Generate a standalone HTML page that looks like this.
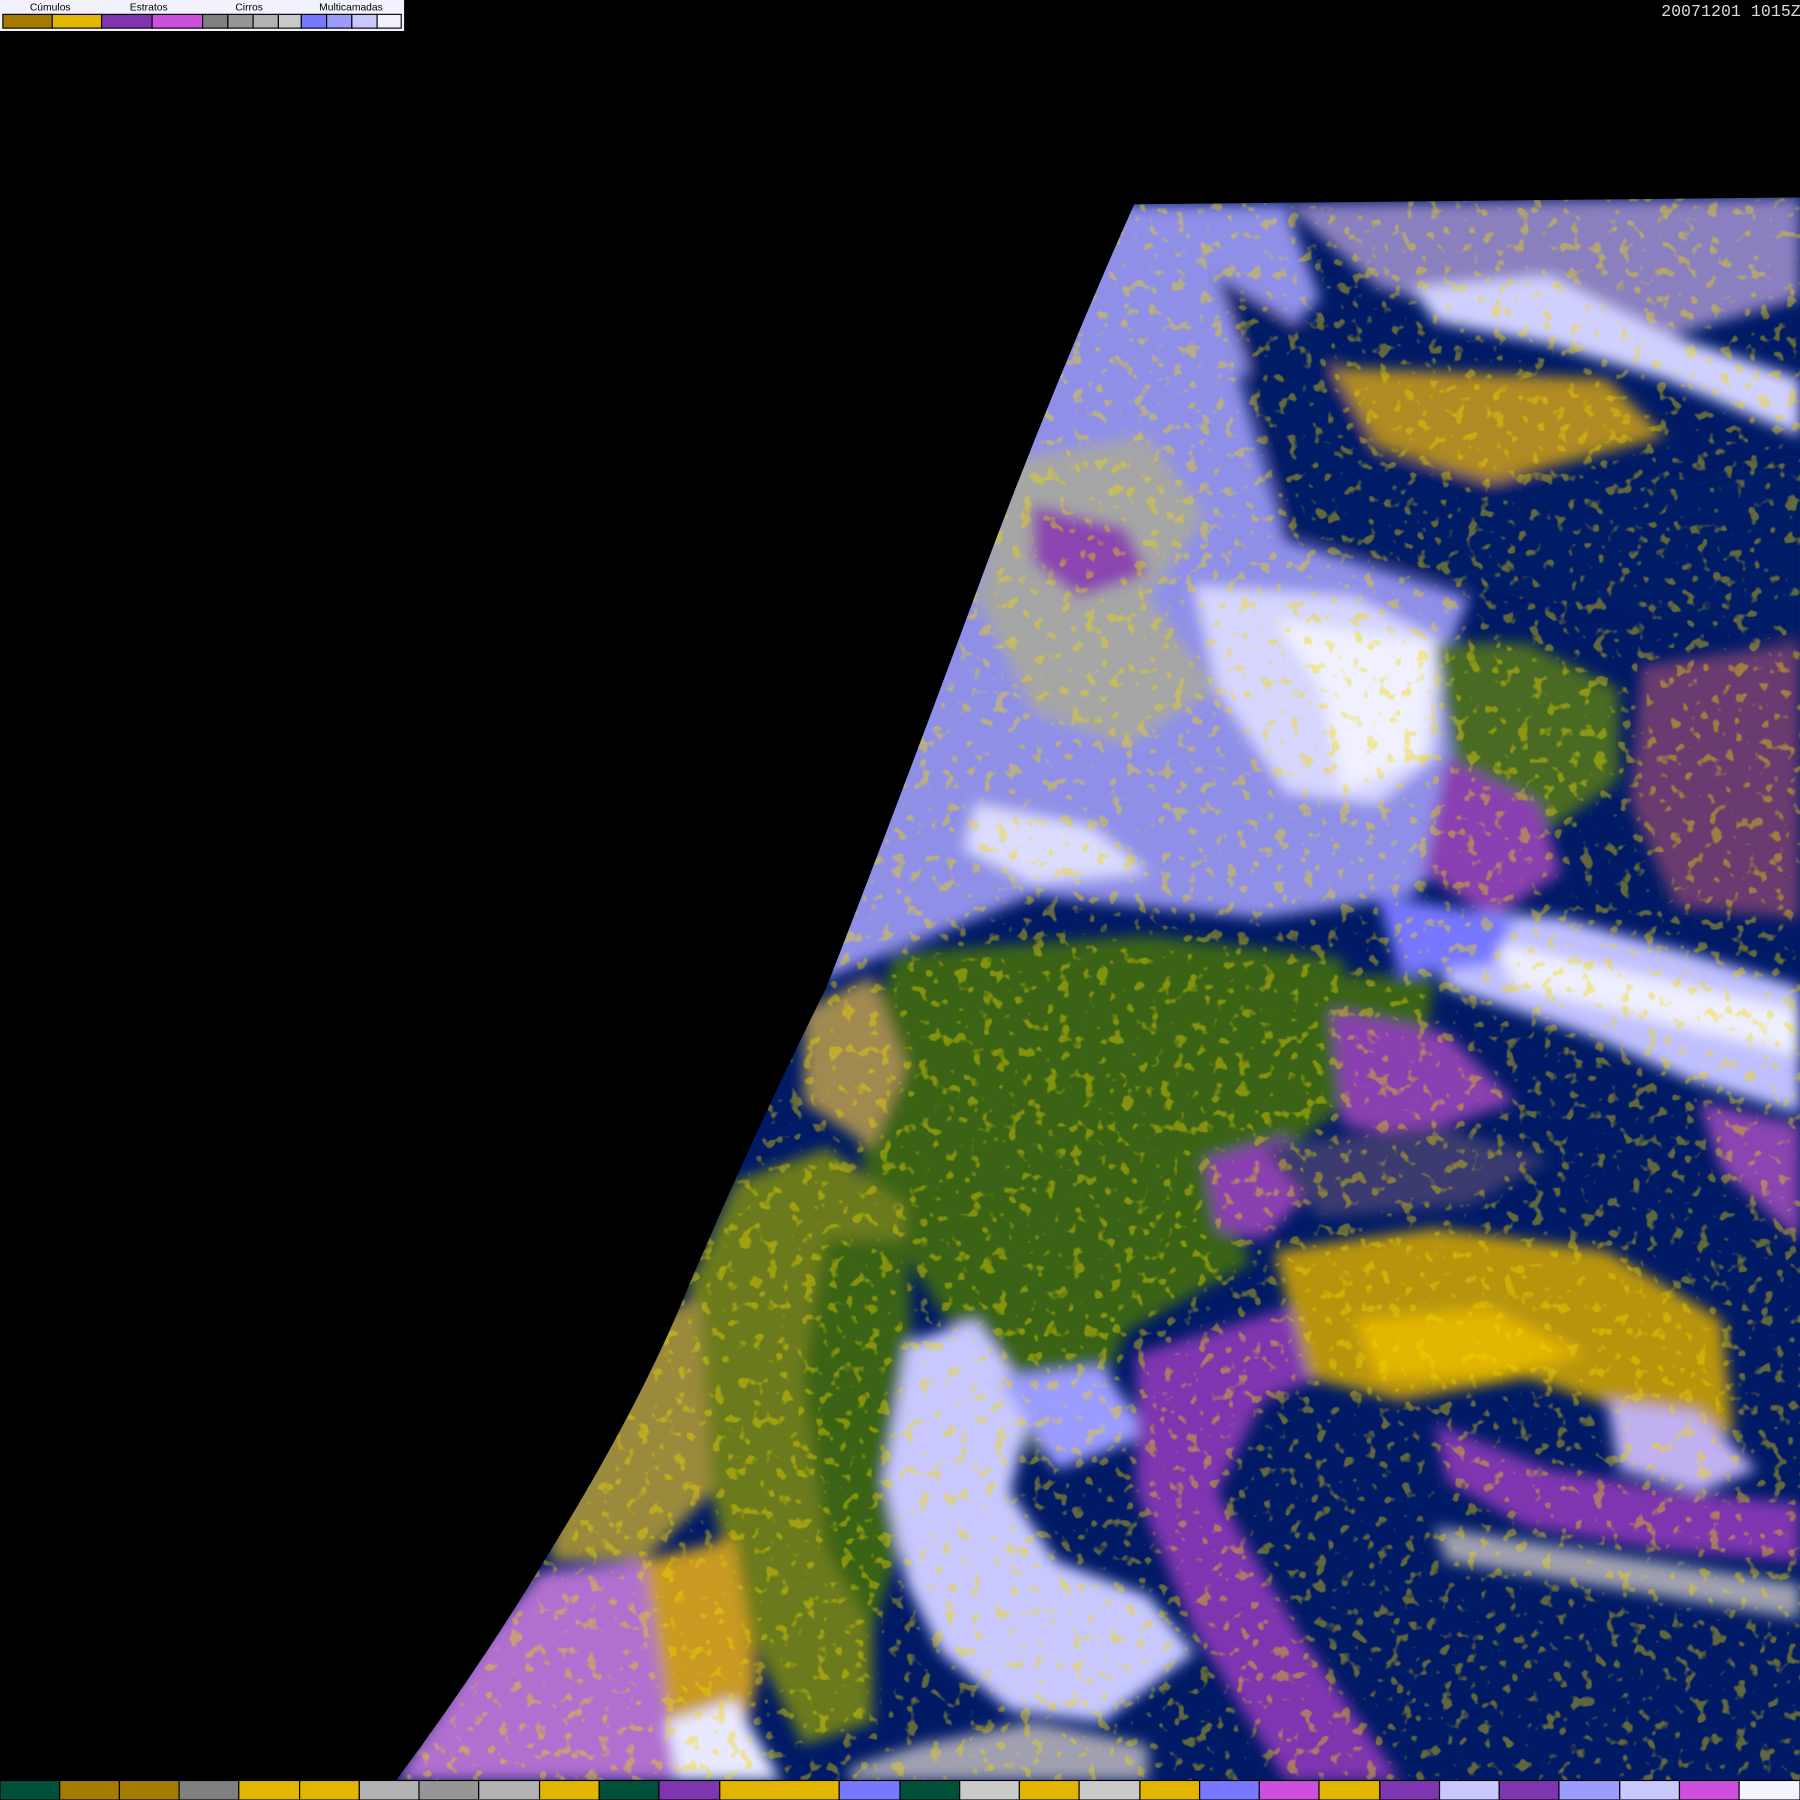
<!DOCTYPE html>
<html><head><meta charset="utf-8"><style>
html,body{margin:0;padding:0;background:#000;width:1800px;height:1800px;overflow:hidden}
svg{display:block}
</style></head><body>
<svg width="1800" height="1800" viewBox="0 0 1568 1568" xmlns="http://www.w3.org/2000/svg">
<defs>
<clipPath id="disc"><path d="M988,178 L1568,172 L1568,1551 L345,1551 Q420,1450 480,1350 Q560,1220 600,1120 Q660,980 720,860 Q790,680 860,490 Q920,330 988,178 Z"/></clipPath>
<filter id="n" x="0" y="0" width="100%" height="100%">
<feTurbulence type="fractalNoise" baseFrequency="0.09" numOctaves="2" seed="3"/>
<feColorMatrix values="0 0 0 0 0.89  0 0 0 0 0.71  0 0 0 0 0  0 0 0 9 -5.4"/>
</filter>
<filter id="b"><feGaussianBlur stdDeviation="6"/></filter>
</defs>
<rect width="1568" height="1568" fill="#000"/>
<g clip-path="url(#disc)">
<rect x="300" y="160" width="1300" height="1400" fill="#001a66"/>
<g filter="url(#b)">
<path d="M700,178 L1120,178 L1150,260 L1080,330 L1120,470 L1280,520 L1250,600 L1300,700 L1230,780 L1100,800 L900,780 L700,860 Z" fill="#8f8fe8"/>
<path d="M1120,178 L1568,172 L1568,260 L1430,300 L1300,280 L1200,250 Z" fill="#8a80c0"/>
<path d="M1230,250 L1350,240 L1450,290 L1568,330 L1568,380 L1450,330 L1350,300 L1250,280Z" fill="#d0d0ff"/>
<path d="M880,400 L1000,380 L1050,450 L1000,520 L1060,600 L980,650 L900,620 L850,520 Z" fill="#a6a6a6"/>
<path d="M900,440 L980,460 L1000,500 L940,520 L900,490Z" fill="#8a45b0"/>
<path d="M1040,510 L1180,520 L1260,560 L1250,660 L1200,700 L1120,690 L1060,600 Z" fill="#d6d6ff"/>
<path d="M1110,540 L1250,560 L1240,660 L1170,690 L1150,600Z" fill="#f0f0ff"/>
<path d="M850,700 L950,720 L1000,760 L900,770 L840,740Z" fill="#dcdcff"/>
<path d="M1060,240 L1160,300 L1200,400 L1350,420 L1480,420 L1568,400 L1568,560 L1480,540 L1350,520 L1240,500 L1120,460 L1090,330Z" fill="#001a66"/>
<path d="M1160,320 L1400,330 L1450,380 L1300,420 L1200,390Z" fill="#b08a20"/>
<path d="M1250,560 L1330,560 L1410,600 L1410,680 L1340,730 L1270,690 Z" fill="#4a6b22"/>
<path d="M1260,660 L1340,700 L1360,760 L1300,800 L1240,760Z" fill="#8a3fb0"/>
<path d="M1430,580 L1568,560 L1568,800 L1460,790 L1420,700Z" fill="#6a3a70"/>
<path d="M1240,790 L1360,800 L1470,830 L1568,860 L1568,970 L1470,940 L1380,900 L1260,860Z" fill="#c0c0ff"/>
<path d="M1300,820 L1568,880 L1568,920 L1320,860Z" fill="#eeeeff"/>
<path d="M1200,780 L1320,800 L1300,840 L1220,850Z" fill="#7777ff"/>
<path d="M1480,960 L1568,980 L1568,1080 L1500,1020Z" fill="#8a45b0"/>
<path d="M780,830 L1000,815 L1170,835 L1175,960 L1110,1010 L1060,1040 L1090,1100 L980,1160 L950,1240 L900,1270 L850,1190 L800,1110 L760,1050 L740,950 Z" fill="#3a6418"/>
<path d="M1160,850 L1250,850 L1240,920 L1180,950Z" fill="#3a6418"/>
<path d="M1160,880 L1260,900 L1320,960 L1230,990 L1170,980Z" fill="#8a3fb0"/>
<path d="M1050,1010 L1120,990 L1150,1030 L1100,1080 L1060,1070Z" fill="#8a3fb0"/>
<path d="M640,1030 L720,1000 L790,1050 L780,1200 L760,1330 L760,1500 L700,1520 L640,1400 L610,1250 L600,1120Z" fill="#6a7a1a"/>
<path d="M720,1080 L790,1080 L800,1300 L760,1420 L720,1350 L700,1200Z" fill="#3a6418"/>
<path d="M700,880 L760,850 L790,930 L760,1000 L700,960Z" fill="#a08a50"/>
<path d="M790,1170 L850,1150 L900,1220 L880,1300 L920,1360 L1000,1390 L1040,1440 L960,1500 L880,1490 L820,1440 L790,1380 L770,1290 Z" fill="#c8c8ff"/>
<path d="M870,1200 L960,1190 L1000,1250 L920,1280Z" fill="#9c9cff"/>
<path d="M990,1180 L1120,1140 L1260,1130 L1200,1180 L1100,1220 L1060,1300 L1130,1420 L1220,1551 L1120,1551 L1040,1420 L990,1300Z" fill="#7f35b0"/>
<path d="M1250,1240 L1350,1280 L1470,1300 L1568,1310 L1568,1360 L1450,1350 L1330,1330 L1260,1290Z" fill="#7f35b0"/>
<path d="M1110,1090 L1250,1070 L1400,1090 L1500,1150 L1510,1250 L1420,1230 L1330,1200 L1220,1220 L1140,1200 Z" fill="#b89410"/>
<path d="M1180,1150 L1300,1140 L1380,1180 L1300,1200 L1200,1200Z" fill="#e2b600"/>
<path d="M1400,1220 L1480,1230 L1530,1280 L1480,1300 L1410,1280Z" fill="#c0b0f0"/>
<path d="M1250,1330 L1568,1380 L1568,1410 L1260,1360Z" fill="#a0a0b0"/>
<path d="M1100,1000 L1250,980 L1350,1010 L1280,1050 L1150,1060Z" fill="#3a3a70"/>
<path d="M345,1551 L420,1430 L470,1370 L560,1360 L610,1430 L640,1551Z" fill="#b070d0"/>
<path d="M560,1360 L640,1340 L660,1460 L640,1551 L590,1551Z" fill="#c89a20"/>
<path d="M480,1300 L560,1150 L610,1130 L620,1300 L560,1360 L480,1360Z" fill="#9a8a3a"/>
<path d="M580,1500 L640,1480 L680,1551 L590,1551Z" fill="#e8e8ff"/>
<path d="M740,1540 L800,1520 L900,1500 L1000,1520 L1000,1551 L740,1551Z" fill="#a0a0b0"/>
</g>
<rect x="300" y="160" width="1300" height="1400" filter="url(#n)" opacity="0.4"/>
</g>
<rect x="0" y="0" width="352" height="27" fill="#f2f2ff"/>
<g font-family="Liberation Sans, sans-serif" font-size="9" fill="#000">
<text x="26" y="9">Cúmulos</text><text x="113" y="9">Estratos</text><text x="205" y="9">Cirros</text><text x="278" y="9">Multicamadas</text>
</g>
<g stroke="#000" stroke-width="1">
<rect x="2.5" y="12.5" width="43" height="12" fill="#a57b00"/>
<rect x="45.5" y="12.5" width="43" height="12" fill="#e2b600"/>
<rect x="88.5" y="12.5" width="44" height="12" fill="#7f35b0"/>
<rect x="132.5" y="12.5" width="44" height="12" fill="#cc50dd"/>
<rect x="176.5" y="12.5" width="22" height="12" fill="#808080"/>
<rect x="198.5" y="12.5" width="22" height="12" fill="#969696"/>
<rect x="220.5" y="12.5" width="22" height="12" fill="#b2b2b2"/>
<rect x="242.5" y="12.5" width="20" height="12" fill="#cacaca"/>
<rect x="262.5" y="12.5" width="22" height="12" fill="#7777ff"/>
<rect x="284.5" y="12.5" width="22" height="12" fill="#9c9cff"/>
<rect x="306.5" y="12.5" width="22" height="12" fill="#c8c8ff"/>
<rect x="328.5" y="12.5" width="21" height="12" fill="#f2f2ff"/>
</g>
<text x="1447" y="14" font-family="Liberation Mono, monospace" font-size="14.5" fill="#d8d8d8">20071201 1015Z</text>
<g stroke="#000" stroke-width="1">
<rect x="0" y="1551" width="52" height="17" fill="#00503a"/>
<rect x="52" y="1551" width="52" height="17" fill="#a57b00"/>
<rect x="104" y="1551" width="52" height="17" fill="#a57b00"/>
<rect x="156" y="1551" width="52" height="17" fill="#808080"/>
<rect x="208" y="1551" width="53" height="17" fill="#e2b600"/>
<rect x="261" y="1551" width="52" height="17" fill="#e2b600"/>
<rect x="313" y="1551" width="52" height="17" fill="#b2b2b2"/>
<rect x="365" y="1551" width="52" height="17" fill="#969696"/>
<rect x="417" y="1551" width="53" height="17" fill="#b2b2b2"/>
<rect x="470" y="1551" width="52" height="17" fill="#e2b600"/>
<rect x="522" y="1551" width="52" height="17" fill="#00503a"/>
<rect x="574" y="1551" width="53" height="17" fill="#7f35b0"/>
<rect x="627" y="1551" width="104" height="17" fill="#e2b600"/>
<rect x="731" y="1551" width="53" height="17" fill="#7777ff"/>
<rect x="784" y="1551" width="52" height="17" fill="#00503a"/>
<rect x="836" y="1551" width="52" height="17" fill="#cacaca"/>
<rect x="888" y="1551" width="52" height="17" fill="#e2b600"/>
<rect x="940" y="1551" width="53" height="17" fill="#cacaca"/>
<rect x="993" y="1551" width="52" height="17" fill="#e2b600"/>
<rect x="1045" y="1551" width="52" height="17" fill="#7777ff"/>
<rect x="1097" y="1551" width="52" height="17" fill="#cc50dd"/>
<rect x="1149" y="1551" width="53" height="17" fill="#e2b600"/>
<rect x="1202" y="1551" width="52" height="17" fill="#7f35b0"/>
<rect x="1254" y="1551" width="52" height="17" fill="#c8c8ff"/>
<rect x="1306" y="1551" width="52" height="17" fill="#7f35b0"/>
<rect x="1358" y="1551" width="53" height="17" fill="#9c9cff"/>
<rect x="1411" y="1551" width="52" height="17" fill="#c8c8ff"/>
<rect x="1463" y="1551" width="52" height="17" fill="#cc50dd"/>
<rect x="1515" y="1551" width="53" height="17" fill="#f4f4ff"/>
</g>
</svg>
</body></html>
